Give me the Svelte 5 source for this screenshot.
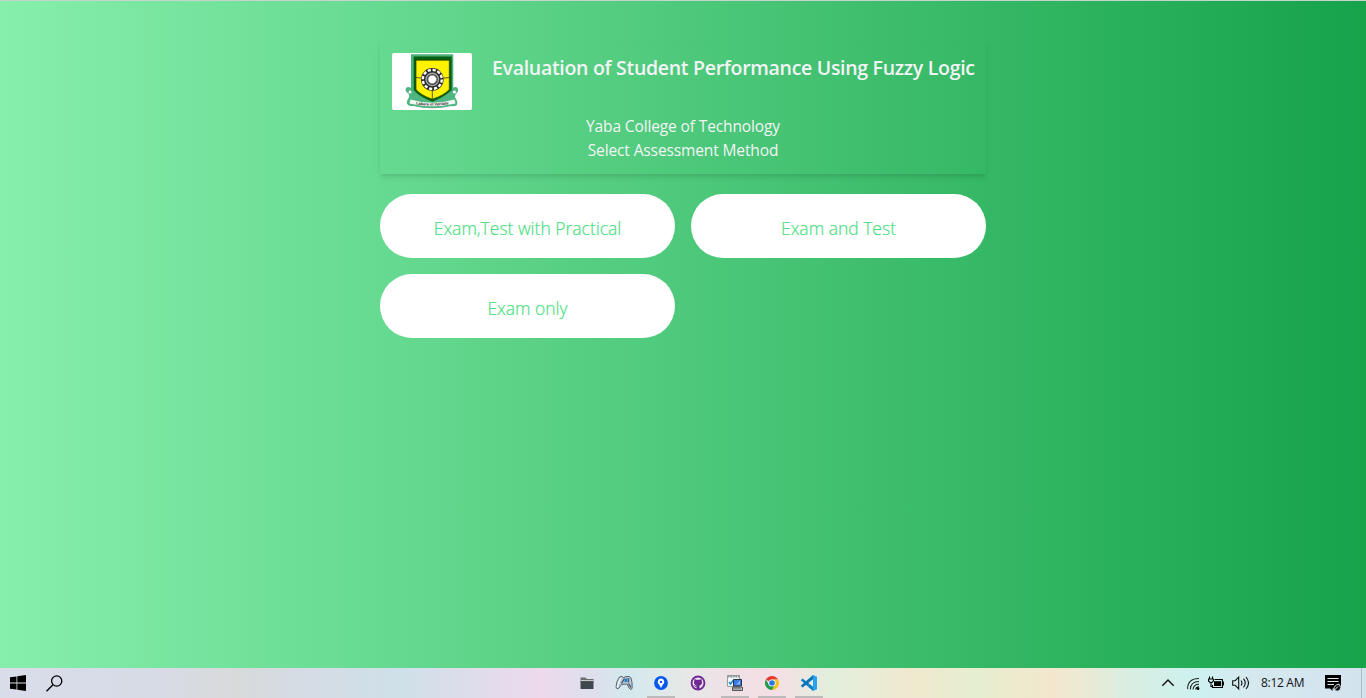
<script>
  const methods = ['Exam,Test with Practical', 'Exam and Test', 'Exam only'];
  const apps = [
    { id: 'files', open: false },
    { id: 'gamepad', open: false },
    { id: 'pin', open: true },
    { id: 'github', open: false },
    { id: 'remote', open: true },
    { id: 'chrome', open: true },
    { id: 'vscode', open: true }
  ];
</script>

<div class="screen">
  <main>
    <div class="content">
      <header class="card">
        <div class="head">
          <svg class="crest" viewBox="0 0 80 57">
            <rect width="80" height="57" rx="2" fill="#fff" />
            <path d="M19 35c-4-3-7 1-4.500 4 2 2 3 2 2.500 5l-2 4c-1 4 3 5.500 6 5q19 4.500 38.500 0c4 1 7-1 5.500-5l-2-4c0-2 1-3 2.500-5 2-3-1-7-4.500-4z" fill="#4fb581" />
            <path d="M19 1.300h42.300v36.200Q54 44 40.300 49.500 26 44 19 37.500z" fill="#4bb17a" />
            <path d="M21.700 3.500h38v33.500Q53 43.500 40.300 48.800 27 43.500 21.700 37z" fill="#07600f" />
            <path d="M24 7.200h33.300v29.300Q52 42.500 40.300 46.200 29 42.500 24 36.500z" fill="#fff200" stroke="#2d3c00" stroke-width=".7" />
            <path d="M24 24.500l6 .7m27.300-.7l-6 .7M40.300 37v9" stroke="#333" stroke-width=".8" />
            <circle cx="40.300" cy="26.400" r="11.300" fill="#292929" />
            <circle cx="40.300" cy="26.400" r="9.500" fill="none" stroke="#fff" stroke-width="2.400" stroke-dasharray="3.200 1.770" />
            <circle cx="40.300" cy="26.400" r="6.200" fill="#333" stroke="#aaa" stroke-width="1.400" />
            <circle cx="40.300" cy="26.400" r="4.200" fill="#fff" stroke="#999" stroke-width=".8" />
            <path d="M17 37.500q3-.5 2.500 2.500l-3 .5zM63.500 37.500q-3-.5-2.500 2.500l3 .5z" fill="#fff" />
            <path d="M18.500 46.500Q40 53 62.500 46.500l1 4Q40 56 17.500 50.500z" fill="#f4f6f4" />
            <path id="motto" d="M24 51.300Q40 54 58 51" fill="none" />
            <text font-family="Liberation Sans" font-size="3.900" font-weight="700" fill="#222"><textPath href="#motto">Labore et Veritate</textPath></text>
          </svg>
          <h1>Evaluation of Student Performance Using Fuzzy Logic</h1>
        </div>
        <p>Yaba College of Technology</p>
        <p>Select Assessment Method</p>
      </header>
      <div class="grid">
        {#each methods as label}
          <button>{label}</button>
        {/each}
      </div>
    </div>
  </main>

  <footer>
    <div class="left">
      <svg width="16" height="16" viewBox="0 0 16 16"><path d="M0 2.300l6.500-.9v6.200H0zM7.300 1.200L16 0v7.600H7.300zM0 8.400h6.500v6.200L0 13.700zM7.300 8.400H16V16l-8.700-1.200z" /></svg>
      <svg class="search" width="17" height="17" viewBox="0 0 17 17" fill="none" stroke="#000" stroke-width="1.300"><circle cx="10.700" cy="6" r="5.100" /><path d="M7 9.700L.5 16.200" stroke-width="1.500" /></svg>
    </div>
    <div class="apps">
      {#each apps as a}
        <div class="app" class:open={a.open}>
          <svg width="18" height="18" viewBox="0 0 18 18">
            {#if a.id === 'files'}
              <path d="M2.500 3.500h5l1.500 1.500h6.500V8h-13z" fill="#6b6e70" />
              <path d="M2.500 6.500h13" stroke="#c7c8c8" />
              <path d="M2.500 7.300h13V15h-13z" fill="#41484d" />
            {:else if a.id === 'gamepad'}
              <path d="M4.500 3Q7 1.500 8.500 3.500l2.500-.8q4-1.200 5 1.300 1.400 4 1.200 9.500-.6 3.600-3 .7L12 10l-5.500.5-3 4Q1.500 15.500 1 13 1.300 7 4.500 3z" fill="#bccbd9" stroke="#4a5665" stroke-width=".9" />
              <path d="M5.500 4L3 10.500l-.8 3" fill="none" stroke="#f7fafc" stroke-width="1.300" />
              <path d="M6.500 9.500l3-5M13.500 9.500l2.500 4" fill="none" stroke="#3c4b5b" stroke-width="1.300" />
              <path d="M9.500 5l3-.8v3.600l-3 .4z" fill="#237fc5" /><path d="M13.500 4v4.500" stroke="#526273" stroke-width="1.400" />
            {:else if a.id === 'pin'}
              <circle cx="9" cy="9" r="6.900" fill="#0756ed" />
              <path d="M9 4.600a3.300 3.300 0 0 1 1.900 6L9 14l-1.900-3.400A3.300 3.300 0 0 1 9 4.600z" fill="#fff" /><circle cx="9" cy="7.900" r="1.200" fill="#0756ed" />
            {:else if a.id === 'github'}
              <circle cx="9" cy="9" r="7.400" fill="#702993" />
              <circle cx="9" cy="9" r="5.500" fill="#eee7f0" />
              <path d="M5.500 5l2 .8h3l2-.8.3 2.200q1 3.500-2.300 4.200V15h-3v-3.600Q4.200 10.700 5.200 7.200z" fill="#702993" />
              <path d="M5 11.200q.7 1.600 2.700 1.300" fill="none" stroke="#702993" />
            {:else if a.id === 'remote'}
              <path d="M1.500 1.500h12v11h-12z" fill="#f7fafc" stroke="#969da3" /><path d="M1.500 2.500h12" stroke="#8d9498" stroke-width="2" stroke-dasharray="2 .6" />
              <path d="M3 8l1.500 2 3-4" fill="none" stroke="#1683c6" stroke-width="1.400" />
              <path d="M7.500 5.500h8v6.500h-8z" fill="#3b78e2" stroke="#27344b" /><path d="M10 10.500l4-4v4z" fill="#84b4f5" />
              <path d="M6.500 13.200h10v3.300h-10z" fill="#c5c8ca" stroke="#333" stroke-width=".8" /><path d="M7.500 14.800h8" stroke="#222" stroke-dasharray="1 1" />
            {:else if a.id === 'chrome'}
              <path d="M9 9L2.900 5.500A7 7 0 0 1 15.100 5.500L9 5.500z" fill="#e33b2e" />
              <path d="M15.100 5.500A7 7 0 0 1 9 16l3-5.200V5.500z" fill="#fbc116" />
              <path d="M2.900 5.500A7 7 0 0 0 9 16l3-5.200H9L6 10.700z" fill="#249b48" />
              <circle cx="9" cy="9" r="3.600" fill="#fff" /><circle cx="9" cy="9" r="2.800" fill="#2678e7" />
            {:else}
              <path d="M2.600 4.500L13 12.800V17L.8 6.300z" fill="#087fc6" /><path d="M.8 11.700L13 1v4.200L2.600 13.500z" fill="#0873b8" />
              <path d="M13 1l4 1.800v12.400L13 17z" fill="#26a4ee" />
            {/if}
          </svg>
        </div>
      {/each}
    </div>
    <div class="tray">
      <svg width="14" height="16" viewBox="0 0 14 16" fill="none" stroke="#111" stroke-width="1.400"><path d="M1.300 10.700L7 5l5.700 5.700" /></svg>
      <svg class="wifi" width="14" height="16" viewBox="0 0 14 16" fill="none" stroke="#222" stroke-width="1.100"><path d="M.6 14Q.6 3.500 12 3.500M3.300 14.500Q3.600 6.500 12 6.500M6 14.500Q6.600 9.300 12 9.300M8.600 14.500q.5-2.500 3.400-2.600" /><circle cx="11" cy="13.700" r="1.400" fill="#000" stroke="none" /></svg>
      <svg class="battery" width="16" height="16" viewBox="0 0 16 16"><path d="M6.500 4.500h7.900v8H4.500V10M15.400 6.500v4" fill="none" stroke="#000" stroke-width="1.100" /><path d="M6 6.200h7V11H6z" /><path d="M1.500 1.500v2M4.500 1.500v2M.6 4h4.800v2L4 7.500H2L.6 6zM3 7.500v4h1.500" fill="none" stroke="#000" stroke-width="1.100" /></svg>
      <svg class="sound" width="17" height="16" viewBox="0 0 17 16" fill="none" stroke="#111" stroke-width="1.100"><path d="M.7 5.700h2.500l3.500-3.500v11.600L3.200 10.300H.7zM9 5.500q2 2.500 0 5M11.500 3.700q3.500 4.300 0 8.600M14 2q5 6 0 12" /></svg>
      <span class="time">8:12 AM</span>
      <svg class="note" width="17" height="17" viewBox="0 0 17 17"><path d="M0 0h16v13.500H7.500V16L5 13.500H0z" /><path d="M2.500 3.500h11M2.500 6.500h11M2.500 9.500h6.500" stroke="#dcebf1" stroke-width="1.200" /><path d="M9 14.500q-.5-4 5-5.500 3 4 1 6t-4.500.8z" fill="#111" stroke="#dcebf1" /><path d="M9.500 15l3.500-3.500" stroke="#dcebf1" /></svg>
      <i></i>
    </div>
  </footer>
</div>

<style>
  .screen {
    box-sizing: border-box;
    width: 1366px;
    height: 698px;
    display: flex;
    flex-direction: column;
    overflow: hidden;
    font-family: "Open Sans", "Noto Sans", sans-serif;
  }
  main {
    box-sizing: border-box;
    height: 668px;
    border-top: 1px solid #c5d5cb;
    padding-top: 40px;
    background: linear-gradient(to right, #86efac, #16a34a);
  }
  .content { width: 606px; margin: 0 auto; }
  .card {
    box-sizing: border-box;
    height: 133px;
    padding: 12px;
    color: #f3f4f6;
    text-align: center;
    box-shadow: 0 4px 6px -1px rgba(0, 0, 0, 0.1), 0 2px 4px -1px rgba(0, 0, 0, 0.06);
  }
  .head { display: flex; gap: 20px; height: 61px; }
  .crest { width: 80px; height: 57px; flex: none; }
  h1 {
    margin: 0;
    font-size: 19.500px;
    line-height: 30px;
    font-weight: 600;
    letter-spacing: -0.300px;
    white-space: nowrap;
  }
  p { margin: 0; font-size: 15.500px; letter-spacing: -0.120px; line-height: 24px; white-space: nowrap; }
  .grid {
    margin-top: 20px;
    display: grid;
    grid-template-columns: 1fr 1fr;
    gap: 16px;
  }
  button {
    height: 64px;
    padding: 3px 0 0;
    border: 0;
    border-radius: 32px;
    background: #fff;
    color: #4ade80;
    font-family: inherit;
    font-size: 17.500px;
    font-weight: 300;
    line-height: 28px;
    -webkit-text-stroke: 0.200px #4ade80;
  }
  footer {
    height: 30px;
    display: grid;
    grid-template-columns: 568px 1fr auto;
    background: linear-gradient(90deg, #d9dde9 0, #d7dbe6 150px, #d8dada 235px, #d4dce5 310px, #cfe0e8 400px, #e0dcec 480px, #ecdaec 540px, #dfdfed 590px, #d3e9ed 628px, #e5e8e7 680px, #f0e1e5 735px, #f4dfe5 775px, #e2efdd 830px, #f0e9cf 910px, #e6eecf 975px, #f2e7cd 1050px, #eee9d2 1075px, #d8eee2 1130px, #cdf1ef 1195px, #d6e8ef 1260px, #d2e3ee 1366px);
  }
  .left { display: flex; align-items: center; padding-left: 10px; }
  .search { margin-left: 20px; }
  .apps { display: flex; }
  .app {
    box-sizing: border-box;
    width: 37px;
    height: 30px;
    display: flex;
    justify-content: center;
    padding-top: 6px;
  }
  .open { background: linear-gradient(#bbb, #bbb) center bottom / 28px 2px no-repeat; }
  .tray { display: flex; align-items: center; }
  .wifi { margin-left: 12px; }
  .battery { margin-left: 7px; }
  .sound { margin-left: 8px; }
  .time { width: 44px; margin-left: 12px; font-size: 12px; letter-spacing: -0.300px; line-height: 16px; white-space: nowrap; color: #111; }
  .note { margin-left: 20px; }
  i { width: 1px; height: 30px; margin: 0 4px 0 19px; background: #aebbc4; }
</style>
